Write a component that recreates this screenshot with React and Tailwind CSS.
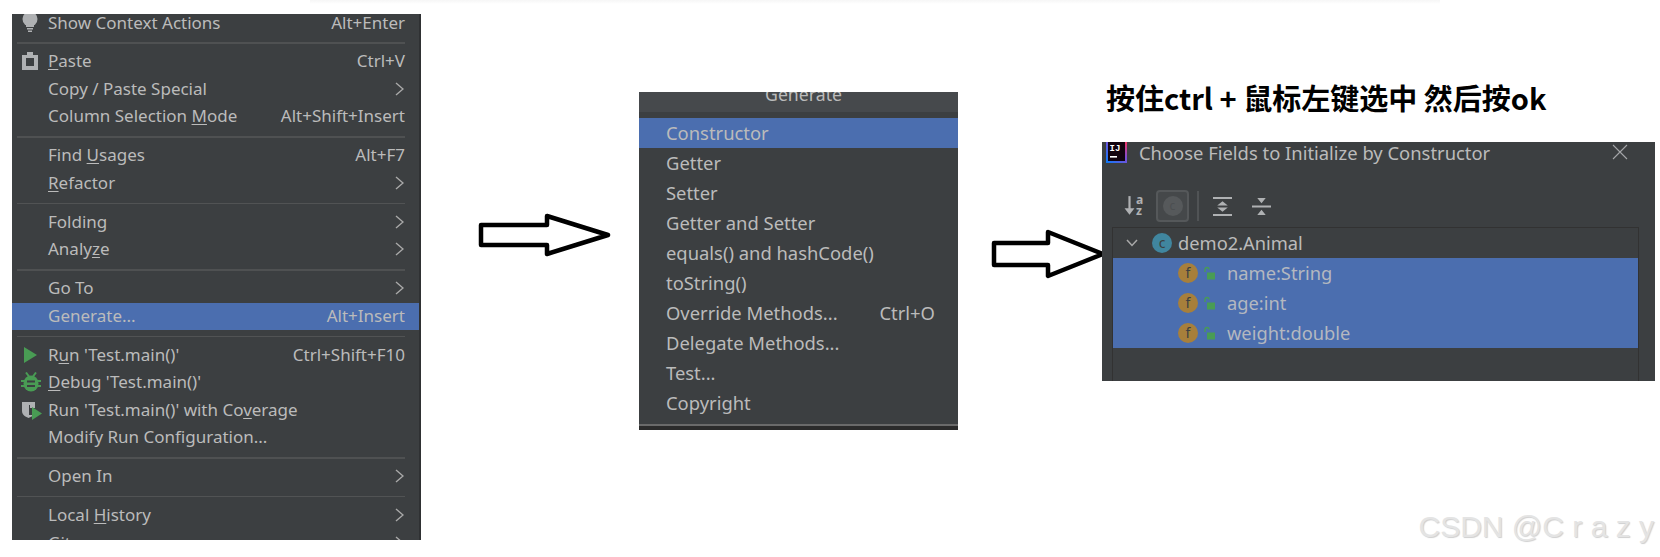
import React from "react";

const Chevron = ({ className = "w-[9px] h-[14px] mr-[1px]" }) => (
  <svg viewBox="0 0 9 14" className={className} fill="none" stroke="#a9a9a9" strokeWidth="1.4">
    <path d="M1 1l7 6-7 6" />
  </svg>
);

const Bulb = () => (
  <svg viewBox="0 0 18 20" className="w-[18px] h-[20px]">
    <circle cx="9" cy="5" r="7.5" fill="#afb1b3" />
    <rect x="5" y="9" width="8" height="4" fill="#afb1b3" />
    <rect x="6" y="14" width="6" height="1.5" fill="#afb1b3" />
    <rect x="7" y="16.5" width="4" height="1.5" fill="#afb1b3" />
  </svg>
);
const Clip = () => (
  <svg viewBox="0 0 18 18" className="w-[18px] h-[18px]">
    <path fillRule="evenodd" fill="#afb1b3" d="M1 3h5V0h6v3h5v15H1zM5 6v8h8V6z" />
  </svg>
);
const Play = () => (
  <svg viewBox="0 0 18 16" className="w-[18px] h-[16px]">
    <path fill="#499c54" d="M3 0l13 8-13 8z" />
  </svg>
);
const Bug = () => (
  <svg viewBox="0 0 20 20" className="w-[20px] h-[20px]">
    <path stroke="#499c54" strokeWidth="2" fill="none" d="M5 0.5l3 4M15 0.5l-3 4M0 9h20M0 14h20" />
    <ellipse cx="10" cy="11.5" rx="7.5" ry="8" fill="#499c54" />
    <rect x="6" y="8.5" width="8" height="2" fill="#3c3f41" />
    <rect x="6" y="13" width="8" height="2" fill="#3c3f41" />
  </svg>
);
const Coverage = () => (
  <svg viewBox="0 0 22 20" className="w-[22px] h-[20px]">
    <path fill="#afb1b3" d="M1 2h13v9c0 4-4 6-6.5 7C5 17 1 15 1 11z" />
    <path fill="#3c3f41" d="M8 5h6v10H8z" />
    <path fill="#afb1b3" d="M9 5h5v3H9z" />
    <path fill="#499c54" d="M11 7l10 6.5L11 20z" />
  </svg>
);

const U = ({ children }) => <span className="underline underline-offset-2">{children}</span>;

const Sep = ({ thick }) => (
  <div className="h-[11.5px] shrink-0 flex items-center pl-[5px] pr-[14px]">
    <div className={thick ? "h-[2px] w-full bg-[#4f5152]" : "h-px w-full bg-[#515354]"} />
  </div>
);

const Row = ({ icon, children, right, arrow, active, first }) => (
  <div
    className={`flex items-center shrink-0 whitespace-nowrap ${first ? "h-[22.75px] items-end" : "h-[27.5px] pb-[2px]"} ${
      active ? "bg-[#4b6eaf]" : ""
    }`}
  >
    <div className={`flex items-center ${first ? "h-[22.75px] items-start" : ""} w-[36px] shrink-0 pl-[9px]`}>{icon}</div>
    <div className={`flex-1 ${first ? "leading-[18px] pb-[5px]" : ""}`}>{children}</div>
    <div className={`pr-[14px] flex items-center ${first ? "leading-[18px] pb-[5px]" : ""}`}>
      {right}
      {arrow && <Chevron />}
    </div>
  </div>
);

const Gen = ({ children, right, active }) => (
  <div className={`h-[30px] shrink-0 flex items-center justify-between pl-[27px] pr-[23px] ${active ? "bg-[#4b6eaf]" : ""}`}>
    <span>{children}</span>
    {right && <span>{right}</span>}
  </div>
);

const FieldIcon = () => (
  <div className="flex items-center gap-[4px]">
    <div className="w-[20px] h-[20px] rounded-full bg-[#a77f3b] flex items-center justify-center text-[14px] leading-none text-[#3c3f41]">
      f
    </div>
    <svg viewBox="0 0 14 14" className="w-[14px] h-[14px]">
      <path d="M3 6V3.5a2 2 0 0 1 4 0" fill="none" stroke="#499c54" strokeWidth="1.4" />
      <rect x="5" y="6.5" width="8" height="7" fill="#499c54" />
    </svg>
  </div>
);

const Field = ({ children }) => (
  <div className="h-[30px] flex items-center pl-[65px] gap-[11px]">
    <FieldIcon />
    <span>{children}</span>
  </div>
);

export default function App() {
  return (
    <div className="relative w-[1660px] h-[557px] bg-white overflow-hidden flex items-start font-['Noto_Sans','Open_Sans',sans-serif] text-[#bbbbbb]">
      <div className="absolute left-[310px] top-0 w-[1130px] h-[4px] bg-gradient-to-b from-[#f6f6f6] to-white" />

      {/* context menu */}
      <div className="ml-[12px] mt-[14px] w-[409px] h-[526px] overflow-hidden bg-[#3c3f41] border-r-2 border-[#2f3133] text-[17px] flex flex-col shrink-0">
        <Row first icon={<Bulb />} right="Alt+Enter">Show Context Actions</Row>
        <Sep thick />
        <Row icon={<Clip />} right="Ctrl+V"><U>P</U>aste</Row>
        <Row arrow>Copy / Paste Special</Row>
        <Row right="Alt+Shift+Insert">Column Selection <U>M</U>ode</Row>
        <Sep thick />
        <Row right="Alt+F7">Find <U>U</U>sages</Row>
        <Row arrow><U>R</U>efactor</Row>
        <Sep />
        <Row arrow>Folding</Row>
        <Row arrow>Analy<U>z</U>e</Row>
        <Sep thick />
        <Row arrow>Go To</Row>
        <Row active right="Alt+Insert">Generate...</Row>
        <Sep />
        <Row icon={<Play />} right="Ctrl+Shift+F10">R<U>u</U>n 'Test.main()'</Row>
        <Row icon={<Bug />}><U>D</U>ebug 'Test.main()'</Row>
        <Row icon={<Coverage />}>Run 'Test.main()' with Co<U>v</U>erage</Row>
        <Row>Modify Run Configuration...</Row>
        <Sep thick />
        <Row arrow>Open In</Row>
        <Sep />
        <Row arrow>Local <U>H</U>istory</Row>
        <Row arrow>Git</Row>
      </div>

      <svg viewBox="0 0 136 44" className="w-[136px] h-[44px] ml-[57px] mt-[213px] shrink-0" fill="#fff" stroke="#000" strokeWidth="4.5" strokeLinejoin="round">
        <path d="M3 12h66V3l61 19-61 19v-9H3z" />
      </svg>

      {/* generate popup */}
      <div className="ml-[25px] mt-[92px] w-[319px] h-[338px] overflow-hidden bg-[#3c3f41] text-[18.4px] flex flex-col shrink-0">
        <div className="h-[20px] shrink-0 bg-[#46494c] overflow-hidden text-center text-[17.7px] leading-[4px] pl-[10px]">Generate</div>
        <div className="h-[6px] shrink-0" />
        <Gen active>Constructor</Gen>
        <Gen>Getter</Gen>
        <Gen>Setter</Gen>
        <Gen>Getter and Setter</Gen>
        <Gen>equals() and hashCode()</Gen>
        <Gen>toString()</Gen>
        <Gen right="Ctrl+O">Override Methods...</Gen>
        <Gen>Delegate Methods...</Gen>
        <Gen>Test...</Gen>
        <Gen>Copyright</Gen>
        <div className="h-[6px] shrink-0" />
        <div className="h-[2px] shrink-0 bg-[#6a6a6a]" />
        <div className="flex-1 bg-[#2b2b2b]" />
      </div>

      <svg viewBox="0 0 116 50" className="w-[116px] h-[50px] ml-[33px] mt-[229px] shrink-0" fill="#fff" stroke="#000" strokeWidth="4.5" strokeLinejoin="round">
        <path d="M3 14h54V3l55 22-55 22V36H3z" />
      </svg>

      {/* right column */}
      <div className="flex flex-col shrink-0 -ml-[5px]">
        <div className="h-[142px] w-[553px] pt-[78px] pl-[4px] text-black font-bold text-[29px] leading-[38px] font-['Noto_Sans_CJK_SC',sans-serif] whitespace-nowrap">
          按住ctrl + 鼠标左键选中 然后按ok
        </div>
        <div className="w-[553px] h-[239px] overflow-hidden bg-[#3c3f41] text-[18.3px] flex flex-col">
          <div className="h-[24px] shrink-0 flex items-start pl-[4px] pr-[27px]">
            <svg viewBox="0 0 21 21" className="w-[21px] h-[21px] shrink-0">
              <defs>
                <linearGradient id="ij" x1="0" y1="1" x2="1" y2="0">
                  <stop offset="0" stopColor="#087cfa" />
                  <stop offset="0.6" stopColor="#7b4fd6" />
                  <stop offset="1" stopColor="#fe315d" />
                </linearGradient>
              </defs>
              <rect width="21" height="21" fill="url(#ij)" />
              <rect x="2" y="0" width="17" height="19" fill="#12040f" />
              <text x="3.5" y="9" fontSize="9" fontWeight="700" fill="#fff" fontFamily="Liberation Mono, monospace">IJ</text>
              <rect x="4" y="14" width="7" height="1.6" fill="#fff" />
            </svg>
            <span className="ml-[12px] leading-[22px] text-[18.4px] whitespace-nowrap flex-1">Choose Fields to Initialize by Constructor</span>
            <svg viewBox="0 0 16 16" className="w-[16px] h-[16px] mt-[2px]" fill="none" stroke="#a5a7a9" strokeWidth="1.1">
              <path d="M1 1l14 14M15 1L1 15" />
            </svg>
          </div>
          <div className="h-[61px] shrink-0 flex items-center pt-[19px] pl-[22px]">
            <svg viewBox="0 0 20 20" className="w-[22px] h-[22px]">
              <path d="M5 1v14" stroke="#afb1b3" strokeWidth="2" />
              <path d="M0.5 12L5 18l4.5-6z" fill="#afb1b3" />
              <text x="11" y="8.5" fontSize="11" fontWeight="700" fill="#afb1b3" fontFamily="Noto Sans, sans-serif">a</text>
              <text x="11" y="18.5" fontSize="11" fontWeight="700" fill="#afb1b3" fontFamily="Noto Sans, sans-serif">z</text>
            </svg>
            <div className="ml-[10px] w-[33px] h-[32px] rounded-[4px] border-2 border-[#55585a] bg-[#45484a] flex items-center justify-center">
              <div className="w-[20px] h-[20px] rounded-full bg-[#56595b] flex items-center justify-center text-[12px] leading-none text-[#4c4f51]">c</div>
            </div>
            <div className="ml-[8px] w-[2px] h-[30px] bg-[#505355]" />
            <svg viewBox="0 0 18 18" className="ml-[14px] w-[19px] h-[19px]" fill="#afb1b3">
              <path d="M0 0h18v2H0zM0 16h18v2H0zM9 4l5 4H4zM9 14l5-4H4z" />
            </svg>
            <svg viewBox="0 0 18 18" className="ml-[20px] w-[19px] h-[19px]" fill="#afb1b3">
              <path d="M0 8h18v2H0zM5 1h8L9 6zM5 17h8L9 12z" />
            </svg>
          </div>
          <div className="flex-1 ml-[10px] mr-[16px] border border-[#323232] border-b-0 pt-0">
            <div className="h-[30px] flex items-center pl-[13px]">
              <svg viewBox="0 0 12 8" className="w-[12px] h-[8px]" fill="none" stroke="#a9a9a9" strokeWidth="1.5">
                <path d="M1 1l5 5.5L11 1" />
              </svg>
              <div className="ml-[14px] w-[20px] h-[20px] rounded-full bg-[#40869f] flex items-center justify-center text-[14px] leading-none text-[#3c3f41]">c</div>
              <span className="ml-[6px]">demo2.Animal</span>
            </div>
            <div className="bg-[#4b6eaf] text-[#b4b8c0]">
              <Field>name:String</Field>
              <Field>age:int</Field>
              <Field>weight:double</Field>
            </div>
          </div>
        </div>
      </div>

      <div className="absolute right-[6px] top-[509px] text-[30px] leading-[36px] text-[#e4e4e4] font-['Liberation_Sans',sans-serif] [text-shadow:1px_1px_1px_#cfcfcf] whitespace-pre">
        CSDN @C r a z y
      </div>
    </div>
  );
}
